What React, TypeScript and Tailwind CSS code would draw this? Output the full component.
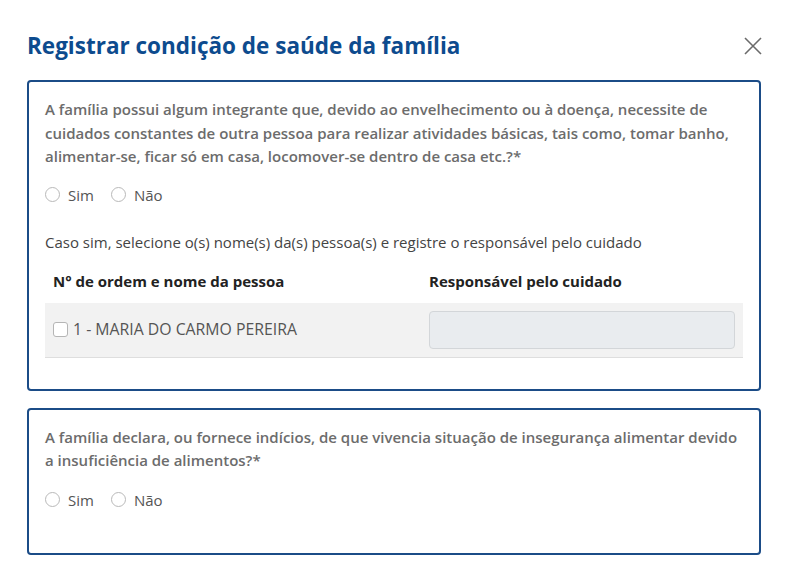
import React from 'react'

function Radio({ label }: { label: string }) {
    return (
        <label className="flex items-center gap-[8px]">
            <span className="block h-[15px] w-[15px] rounded-full border border-[#b9b9b9] bg-white" />
            <span>{label}</span>
        </label>
    )
}

function YesNo() {
    return (
        <div className="flex items-center gap-[17px] text-[15px] text-[#555]">
            <Radio label="Sim" />
            <Radio label="Não" />
        </div>
    )
}

export default function App() {
    return (
        <div className="w-[788px] h-[565px] bg-white overflow-hidden font-['Open_Sans',sans-serif]">
            <div className="flex items-center justify-between pl-[27px] pr-[25px] pt-[30px]">
                <h2 className="text-[22.5px] font-bold leading-[32px] text-[#0d4b8e]">
                    Registrar condição de saúde da família
                </h2>
                <svg width="20" height="20" viewBox="0 0 20 20" className="text-[#6b6b6b]">
                    <path d="M2 2 L18 18 M18 2 L2 18" stroke="currentColor" strokeWidth="1.6" fill="none" />
                </svg>
            </div>

            <div className="mx-[27px] mt-[18px] rounded-[4px] border-2 border-[#1b4c87] px-[16px] pt-[16px] pb-[31px]">
                <p className="text-[15px] font-semibold leading-[23.5px] text-[#6c6c6c]">
                    A família possui algum integrante que, devido ao envelhecimento ou à doença, necessite de cuidados constantes de outra pessoa para realizar atividades básicas, tais como, tomar banho, alimentar-se, ficar só em casa, locomover-se dentro de casa etc.?*
                </p>
                <div className="mt-[15px]">
                    <YesNo />
                </div>
                <p className="mt-[26px] text-[15px] leading-[20px] text-[#444]">
                    Caso sim, selecione o(s) nome(s) da(s) pessoa(s) e registre o responsável pelo cuidado
                </p>
                <div className="mt-[18px]">
                    <div className="grid grid-cols-[376px_1fr] px-[8px] pb-[10px] text-[15px] font-bold text-[#222]">
                        <span>N° de ordem e nome da pessoa</span>
                        <span>Responsável pelo cuidado</span>
                    </div>
                    <div className="grid grid-cols-[376px_1fr] items-center border-b border-[#dedede] bg-[#f2f2f2] px-[8px] py-[8px]">
                        <label className="flex items-center gap-[5px] text-[15.8px] text-[#555]">
                            <span className="block h-[15px] w-[15px] rounded-[3px] border border-[#b5b5b5] bg-white" />
                            1 - MARIA DO CARMO PEREIRA
                        </label>
                        <div className="h-[38px] rounded-[4px] border border-[#d3d6d9] bg-[#e9ecef]" />
                    </div>
                </div>
            </div>

            <div className="mx-[27px] mt-[17px] rounded-[4px] border-2 border-[#1b4c87] px-[16px] pt-[16px] pb-[42px]">
                <p className="text-[15px] font-semibold leading-[23.5px] text-[#6c6c6c]">
                    A família declara, ou fornece indícios, de que vivencia situação de insegurança alimentar devido a insuficiência de alimentos?*
                </p>
                <div className="mt-[16px]">
                    <YesNo />
                </div>
            </div>
        </div>
    )
}
